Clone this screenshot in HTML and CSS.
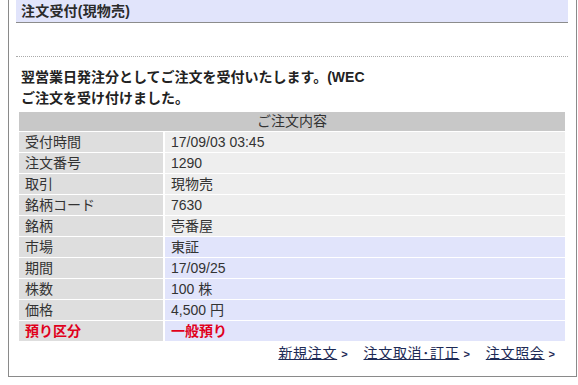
FILE: index.html
```html
<!DOCTYPE html>
<html lang="ja">
<head>
  <meta charset="UTF-8">
  <meta name="viewport" content="width=device-width, initial-scale=1.0">
  <title>注文受付</title>
<link rel="stylesheet" href="styles.css">
</head>
<body>
  <div class="order-frame">
    <h1 class="order-title">注文受付(現物売)</h1>
    <div class="order-spacer"></div>

    <p class="order-message">翌営業日発注分としてご注文を受付いたします。(WEC<br>ご注文を受け付けました。</p>

    <table class="order-table">
      <tr>
        <th colspan="2">ご注文内容</th>
      </tr>
      <tr><td class="label">受付時間</td><td class="value">17/09/03 03:45</td></tr>
      <tr><td class="label">注文番号</td><td class="value">1290</td></tr>
      <tr><td class="label">取引</td><td class="value">現物売</td></tr>
      <tr><td class="label">銘柄コード</td><td class="value">7630</td></tr>
      <tr><td class="label">銘柄</td><td class="value">壱番屋</td></tr>
      <tr class="blue"><td class="label">市場</td><td class="value">東証</td></tr>
      <tr class="blue"><td class="label">期間</td><td class="value">17/09/25</td></tr>
      <tr class="blue"><td class="label">株数</td><td class="value">100 株</td></tr>
      <tr class="blue"><td class="label">価格</td><td class="value">4,500 円</td></tr>
      <tr class="blue red"><td class="label">預り区分</td><td class="value">一般預り</td></tr>
    </table>

    <div class="order-links">
      <a href="#">新規注文</a><span class="chev">&gt;</span>
      <a href="#">注文取消･訂正</a><span class="chev">&gt;</span>
      <a href="#">注文照会</a><span class="chev">&gt;</span>
    </div>
  </div>
</body>
</html>
```

FILE: styles.css
```css
body {
  margin: 0;
  font-family: "Liberation Sans", "Noto Sans CJK JP", sans-serif;
  color: #333;
  background: #fff;
}

/* outer box, top edge is off screen */
.order-frame {
  box-sizing: border-box;
  width: 569px;
  height: 377px;
  margin-left: 8px;
  padding: 0 8px 0 7px;
  border: 1px solid #8a8a8a;
  border-top: none;
}

.order-title {
  margin: 0;
  height: 22px;
  padding-left: 5px;
  background-color: #e1e4fb;
  border-bottom: 1px solid #8c8c8c;
  font-size: 14px;
  line-height: 22px;
  font-weight: bold;
  color: #2b2b2b;
  letter-spacing: 0.2px;
}

.order-spacer {
  height: 33px;
  border-bottom: 1px dotted #aaa;
}

.order-message {
  margin: 10px 0 0 5px;
  font-size: 14px;
  line-height: 21px;
  font-weight: bold;
  color: #222;
}

.order-table {
  width: calc(100% - 2px);
  margin: 2px 0 0 1px;
  border-spacing: 2px 1px;
  font-size: 14px;
  color: #333;
}

.order-table th {
  height: 19px;
  padding: 0;
  background-color: #c8c8c8;
  font-weight: normal;
  line-height: 19px;
  text-align: center;
}

.order-table td {
  height: 20px;
  padding: 0 6px;
  line-height: 20px;
}

.order-table .label {
  width: 132px;
  background-color: #dedede;
}

.order-table .value {
  background-color: #eeeeee;
}

.order-table .blue .value {
  background-color: #e1e4fb;
}

.order-table .red td {
  color: #e0001b;
  font-weight: bold;
}

.order-links {
  margin-top: 1px;
  padding-right: 13px;
  text-align: right;
  font-size: 14px;
  line-height: 20px;
}

.order-links a {
  color: #1d2a55;
  text-decoration: underline;
  letter-spacing: 0.7px;
}

.chev {
  display: inline-block;
  margin: 0 12px 0 4px;
  font-size: 11px;
  font-weight: bold;
  color: #1d2a55;
}

.chev:last-child {
  margin-right: 0;
}
```
